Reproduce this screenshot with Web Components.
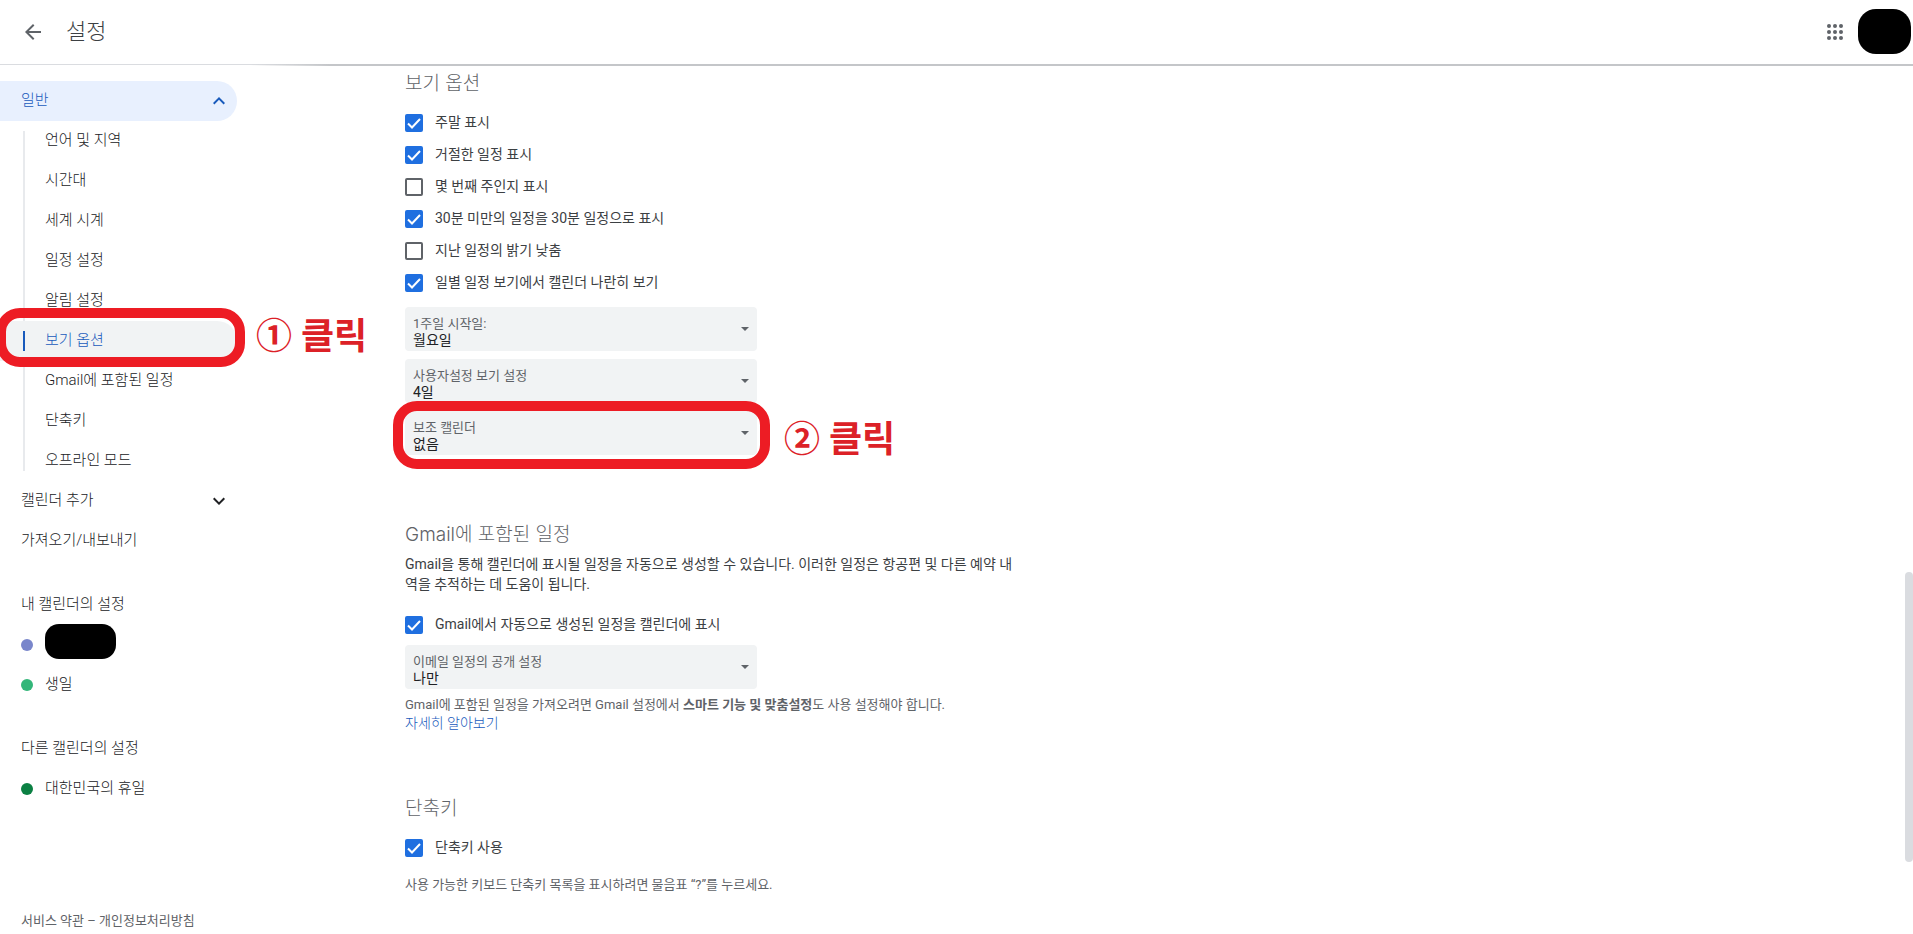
<!DOCTYPE html>
<html lang="ko">
<head>
<meta charset="utf-8">
<title>설정</title>
<style>
  body {
    margin: 0;
    background: #fff;
    color: #3c4043;
    font-family: Roboto, "Noto Sans CJK KR", sans-serif;
    font-size: 14px;
    line-height: 20px;
  }
</style>
</head>
<body>

<settings-page>
  <settings-header slot="header">설정</settings-header>

  <settings-nav slot="nav">
    <nav-item active icon="up">일반</nav-item>
    <nav-group>
      <nav-item sub>언어 및 지역</nav-item>
      <nav-item sub>시간대</nav-item>
      <nav-item sub>세계 시계</nav-item>
      <nav-item sub>일정 설정</nav-item>
      <nav-item sub>알림 설정</nav-item>
      <click-mark class="nav-mark" text="① 클릭"><nav-item sub selected>보기 옵션</nav-item></click-mark>
      <nav-item sub>Gmail에 포함된 일정</nav-item>
      <nav-item sub>단축키</nav-item>
      <nav-item sub>오프라인 모드</nav-item>
    </nav-group>
    <nav-item icon="down">캘린더 추가</nav-item>
    <nav-item>가져오기/내보내기</nav-item>
    <nav-heading>내 캘린더의 설정</nav-heading>
    <nav-item dot="#7986cb"><redacted-name></redacted-name></nav-item>
    <nav-item dot="#33b679">생일</nav-item>
    <nav-heading>다른 캘린더의 설정</nav-heading>
    <nav-item dot="#0b8043">대한민국의 휴일</nav-item>
    <nav-footer slot="footer"></nav-footer>
  </settings-nav>

  <settings-section heading="보기 옵션">
    <check-option checked>주말 표시</check-option>
    <check-option checked>거절한 일정 표시</check-option>
    <check-option>몇 번째 주인지 표시</check-option>
    <check-option checked>30분 미만의 일정을 30분 일정으로 표시</check-option>
    <check-option>지난 일정의 밝기 낮춤</check-option>
    <check-option checked>일별 일정 보기에서 캘린더 나란히 보기</check-option>
    <field-group>
      <select-field label="1주일 시작일:" value="월요일"></select-field>
      <select-field label="사용자설정 보기 설정" value="4일"></select-field>
      <click-mark class="field-mark" text="② 클릭"><select-field label="보조 캘린더" value="없음"></select-field></click-mark>
    </field-group>
  </settings-section>

  <settings-section heading="Gmail에 포함된 일정">
    <section-text>Gmail을 통해 캘린더에 표시될 일정을 자동으로 생성할 수 있습니다. 이러한 일정은 항공편 및 다른 예약 내역을 추적하는 데 도움이 됩니다.</section-text>
    <check-option checked>Gmail에서 자동으로 생성된 일정을 캘린더에 표시</check-option>
    <select-field label="이메일 일정의 공개 설정" value="나만"></select-field>
    <section-text hint>Gmail에 포함된 일정을 가져오려면 Gmail 설정에서 <b>스마트 기능 및 맞춤설정</b>도 사용 설정해야 합니다.<br><a href="#">자세히 알아보기</a></section-text>
  </settings-section>

  <settings-section heading="단축키">
    <check-option checked>단축키 사용</check-option>
    <section-text hint spaced>사용 가능한 키보드 단축키 목록을 표시하려면 물음표 “?”를 누르세요.</section-text>
  </settings-section>
</settings-page>

<script>
class BaseElement extends HTMLElement {

  constructor() {
    super();
    this.attachShadow({ mode: 'open' });
  }

  connectedCallback() {
    this.shadowRoot.innerHTML = `
      <style>
        * { box-sizing: border-box; }
        ${this.css()}
      </style>
      ${this.html()}
    `;
  }

  css() { return ''; }

  html() { return '<slot></slot>'; }
}

class SettingsPage extends BaseElement {
  css() {
    return `
      :host {
        display: flex;
        flex-direction: column;
        min-height: 100vh;
      }
      .body {
        flex: 1;
        display: flex;
      }
      aside {
        flex: 0 0 280px;
        display: flex;
      }
      main {
        flex: 1;
        display: flex;
        flex-direction: column;
        gap: 62px;
        padding: 4px 24px 0 125px;
      }
      .scrollbar {
        flex: 0 0 8px;
        display: grid;
        grid-template-rows: 507fr 290fr 72fr;
      }
      .thumb {
        grid-row: 2;
        border-radius: 4px;
        background: #dadce0;
      }
    `;
  }

  html() {
    return `
      <slot name="header"></slot>
      <div class="body">
        <aside><slot name="nav"></slot></aside>
        <main><slot></slot></main>
        <div class="scrollbar"><div class="thumb"></div></div>
      </div>
    `;
  }
}

class SettingsHeader extends BaseElement {
  css() {
    return `
      :host { display: block; }
      header {
        display: flex;
        align-items: center;
        height: 64px;
        padding: 0 2px 0 21px;
      }
      button {
        display: flex;
        padding: 0;
        border: 0;
        background: none;
        cursor: pointer;
      }
      svg {
        width: 24px;
        height: 24px;
        fill: #5f6368;
      }
      h1 {
        flex: 1;
        margin: 0 0 0 21px;
        font-size: 22px;
        font-weight: 300;
        line-height: 28px;
      }
      .avatar {
        width: 53px;
        height: 45px;
        margin: 0 0 2px 11px;
        border-radius: 18px;
        background: #000;
      }
      .line {
        height: 2px;
        background:
          linear-gradient(to right, transparent 250px, #c4c6c9 330px),
          linear-gradient(#dadce0 1px, transparent 1px);
      }
    `;
  }

  html() {
    return `
      <header>
        <button aria-label="뒤로"><svg viewBox="0 0 24 24"><path d="M20 11H7.83l5.59-5.59L12 4l-8 8 8 8 1.41-1.41L7.83 13H20v-2z"/></svg></button>
        <h1><slot></slot></h1>
        <button aria-label="앱"><svg viewBox="0 0 24 24">
          <circle cx="6" cy="6" r="2"/><circle cx="12" cy="6" r="2"/><circle cx="18" cy="6" r="2"/>
          <circle cx="6" cy="12" r="2"/><circle cx="12" cy="12" r="2"/><circle cx="18" cy="12" r="2"/>
          <circle cx="6" cy="18" r="2"/><circle cx="12" cy="18" r="2"/><circle cx="18" cy="18" r="2"/>
        </svg></button>
        <div class="avatar"></div>
      </header>
      <div class="line"></div>
    `;
  }
}

class SettingsNav extends BaseElement {
  css() {
    return `
      :host {
        flex: 1;
        display: flex;
      }
      nav {
        flex: 1;
        display: flex;
        flex-direction: column;
        padding: 15px 43px 3px 0;
        font-size: 15px;
        font-weight: 300;
        color: #202124;
      }
      .footer { margin-top: auto; }
    `;
  }

  html() {
    return `<nav><slot></slot><div class="footer"><slot name="footer"></slot></div></nav>`;
  }
}

class NavGroup extends BaseElement {
  css() {
    return `
      :host {
        display: block;
        background: linear-gradient(#e8eaed, #e8eaed) 23px 10px / 2px calc(100% - 20px) no-repeat;
      }
    `;
  }
}

class NavItem extends BaseElement {
  css() {
    return `
      :host { display: block; }
      a {
        display: flex;
        align-items: center;
        gap: 12px;
        height: 40px;
        padding: 0 6px 2px 21px;
        border-radius: 0 20px 20px 0;
        color: inherit;
        text-decoration: none;
      }
      span { flex: 1; }
      svg {
        width: 24px;
        height: 24px;
        margin-top: 2px;
        fill: currentColor;
      }
      i {
        width: 12px;
        height: 12px;
        margin-top: 2px;
        border-radius: 50%;
      }
      :host([sub]) a { padding-left: 45px; }
      :host([active]) a {
        color: #185abc;
        background: #e8f0fe;
      }
      :host([selected]) a {
        color: #185abc;
        background: linear-gradient(#185abc, #185abc) 23px 10px / 2px 20px no-repeat #f1f3f4;
      }
    `;
  }

  html() {
    const icons = {
      up: 'M12 8l-6 6 1.41 1.41L12 10.83l4.59 4.58L18 14z',
      down: 'M16.59 8.59L12 13.17 7.41 8.59 6 10l6 6 6-6z'
    };
    const icon = icons[this.getAttribute('icon')];
    const dot = this.getAttribute('dot');

    return `
      <a href="#">
        ${dot ? `<i style="background: ${dot}"></i>` : ''}
        <span><slot></slot></span>
        ${icon ? `<svg viewBox="0 0 24 24"><path d="${icon}"/></svg>` : ''}
      </a>
    `;
  }
}

class NavHeading extends BaseElement {
  css() {
    return `
      :host {
        display: block;
        padding: 33px 0 11px 21px;
      }
    `;
  }
}

class RedactedName extends BaseElement {
  css() {
    return `
      :host {
        display: block;
        width: 71px;
        height: 35px;
        margin-bottom: 6px;
        border-radius: 14px;
        background: #000;
      }
    `;
  }

  html() { return ''; }
}

class NavFooter extends BaseElement {
  css() {
    return `
      :host {
        display: block;
        padding-left: 21px;
        font-size: 13px;
        font-weight: 400;
        color: #5f6368;
      }
      a {
        color: inherit;
        text-decoration: none;
      }
    `;
  }

  html() {
    return `<a href="#">서비스 약관</a> – <a href="#">개인정보처리방침</a>`;
  }
}

class SettingsSection extends BaseElement {
  css() {
    return `
      :host {
        display: flex;
        flex-direction: column;
        align-items: flex-start;
      }
      h2 {
        margin: 0 0 9px;
        font-family: Inter, "Noto Sans CJK KR", sans-serif;
        font-size: 19px;
        font-weight: 300;
        line-height: 28px;
        color: #5f6368;
      }
    `;
  }

  html() {
    return `<h2>${this.getAttribute('heading')}</h2><slot></slot>`;
  }
}

class SectionText extends BaseElement {
  css() {
    return `
      :host {
        display: block;
        max-width: 610px;
        margin: -4px 0 15px;
      }
      :host([hint]) {
        margin: 3px 0 0;
        font-size: 13px;
        line-height: 18px;
        color: #5f6368;
      }
      :host([spaced]) { margin-top: 12px; }
      ::slotted(a) {
        font-size: 14px;
        font-weight: 300;
        color: #185abc;
        text-decoration: none;
      }
    `;
  }
}

class FieldGroup extends BaseElement {
  css() {
    return `
      :host {
        display: flex;
        flex-direction: column;
        align-items: flex-start;
        padding-top: 4px;
      }
    `;
  }
}

class CheckOption extends BaseElement {
  css() {
    return `
      :host { display: block; }
      label {
        display: flex;
        align-items: center;
        gap: 12px;
        height: 32px;
      }
      .box {
        display: grid;
        width: 18px;
        height: 18px;
      }
      input, svg { grid-area: 1 / 1; }
      input {
        appearance: none;
        width: 18px;
        height: 18px;
        margin: 0;
        border: 2px solid #5f6368;
        border-radius: 2px;
      }
      input:checked {
        border-color: #1f6fe0;
        background: #1f6fe0;
      }
      svg {
        width: 18px;
        height: 18px;
        fill: none;
        stroke: #fff;
        stroke-width: 2;
        pointer-events: none;
      }
      input:not(:checked) + svg { display: none; }
      .text { padding-bottom: 2px; }
    `;
  }

  html() {
    return `
      <label>
        <span class="box">
          <input type="checkbox" ${this.hasAttribute('checked') ? 'checked' : ''}>
          <svg viewBox="0 0 18 18"><path d="M3 9.5l4 4 8-8.5"/></svg>
        </span>
        <span class="text"><slot></slot></span>
      </label>
    `;
  }
}

class SelectField extends BaseElement {
  css() {
    return `
      :host {
        display: grid;
        width: 352px;
        height: 44px;
        margin: 4px 0;
      }
      label, select, svg { grid-area: 1 / 1; }
      label {
        z-index: 1;
        align-self: start;
        padding: 8px 8px 0;
        font-size: 13px;
        line-height: 18px;
        color: #5f6368;
        pointer-events: none;
      }
      select {
        appearance: none;
        width: 100%;
        height: 44px;
        padding: 22px 32px 0 8px;
        border: 0;
        border-radius: 4px;
        font: inherit;
        color: #202124;
        background: #f1f3f4;
      }
      svg {
        justify-self: end;
        align-self: center;
        width: 24px;
        height: 24px;
        fill: #5f6368;
        pointer-events: none;
      }
    `;
  }

  html() {
    return `
      <label for="field">${this.getAttribute('label')}</label>
      <select id="field"><option>${this.getAttribute('value')}</option></select>
      <svg viewBox="0 0 24 24"><path d="M8 10l4 4 4-4z"/></svg>
    `;
  }
}

// red frame with a numbered caption, drawn over whatever is slotted in
class ClickMark extends BaseElement {
  css() {
    return `
      :host {
        display: flow-root;
        position: relative;
      }
      .frame {
        position: absolute;
        z-index: 2;
        inset: -6px -13px -10px -12px;
        border: 10px solid #ed1c24;
        border-radius: 24px;
        pointer-events: none;
      }
      :host(.nav-mark) .frame { inset: -13px -8px -6px -4px; }
      .caption {
        position: absolute;
        z-index: 2;
        top: 50%;
        left: 100%;
        margin: -17px 0 0 27px;
        font-size: 36px;
        font-weight: 700;
        line-height: 48px;
        color: #dc2127;
        white-space: nowrap;
      }
      :host(.nav-mark) .caption { margin: -28px 0 0 19px; }
    `;
  }

  html() {
    return `
      <slot></slot>
      <div class="frame"></div>
      <div class="caption">${this.getAttribute('text')}</div>
    `;
  }
}

customElements.define('settings-page', SettingsPage);
customElements.define('settings-header', SettingsHeader);
customElements.define('settings-nav', SettingsNav);
customElements.define('nav-group', NavGroup);
customElements.define('nav-item', NavItem);
customElements.define('nav-heading', NavHeading);
customElements.define('redacted-name', RedactedName);
customElements.define('nav-footer', NavFooter);
customElements.define('settings-section', SettingsSection);
customElements.define('section-text', SectionText);
customElements.define('field-group', FieldGroup);
customElements.define('check-option', CheckOption);
customElements.define('select-field', SelectField);
customElements.define('click-mark', ClickMark);
</script>
</body>
</html>
